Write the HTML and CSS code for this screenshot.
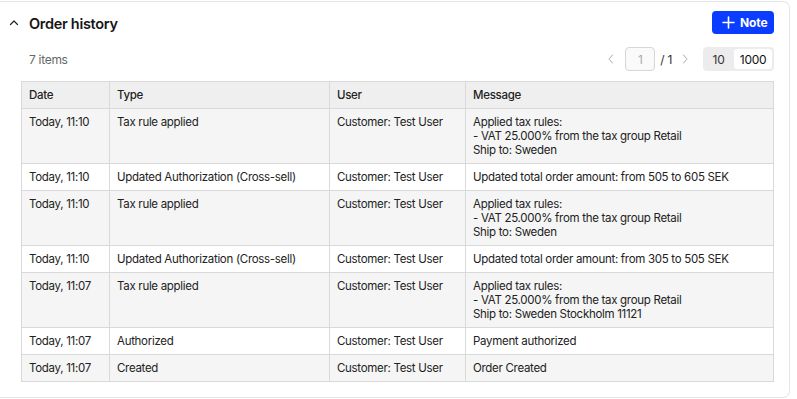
FILE: index.html
```html
<!DOCTYPE html>
<html lang="en">
<head>
<meta charset="utf-8">
<title>Order history</title>
<link rel="stylesheet" href="styles.css">
</head>
<body>
<section class="card">
  <header class="card-head">
    <div class="head-left">
      <svg class="chev" width="12" height="12" viewBox="0 0 12 12"><path d="M2.5 7.5 L6 4 L9.5 7.5" fill="none" stroke="#222" stroke-width="1.2" stroke-linecap="round" stroke-linejoin="round"/></svg>
      <h2 class="title">Order history</h2>
    </div>
    <button class="note-btn"><svg width="13" height="13" viewBox="0 0 13 13"><path d="M6.5 1 V12 M1 6.5 H12" stroke="#fff" stroke-width="1.6" stroke-linecap="round"/></svg><span>Note</span></button>
  </header>
  <div class="toolbar">
    <span class="count">7 items</span>
    <div class="pager">
      <svg class="arrow" width="10" height="12" viewBox="0 0 10 12"><path d="M6.5 2 L3 6 L6.5 10" fill="none" stroke="#bbb" stroke-width="1.1" stroke-linecap="round" stroke-linejoin="round"/></svg>
      <span class="page-input">1</span>
      <span class="page-total">/ 1</span>
      <svg class="arrow" width="10" height="12" viewBox="0 0 10 12"><path d="M3.5 2 L7 6 L3.5 10" fill="none" stroke="#bbb" stroke-width="1.1" stroke-linecap="round" stroke-linejoin="round"/></svg>
      <div class="sizes">
        <span class="size">10</span>
        <span class="size active">1000</span>
      </div>
    </div>
  </div>
  <table class="grid">
    <colgroup><col class="c-date"><col class="c-type"><col class="c-user"><col class="c-msg"></colgroup>
    <thead>
      <tr><th>Date</th><th>Type</th><th>User</th><th>Message</th></tr>
    </thead>
    <tbody>
      <tr><td>Today, 11:10</td><td>Tax rule applied</td><td>Customer: Test User</td><td>Applied tax rules:<br>- VAT 25.000% from the tax group Retail<br>Ship to: Sweden</td></tr>
      <tr><td>Today, 11:10</td><td>Updated Authorization (Cross-sell)</td><td>Customer: Test User</td><td>Updated total order amount: from 505 to 605 SEK</td></tr>
      <tr><td>Today, 11:10</td><td>Tax rule applied</td><td>Customer: Test User</td><td>Applied tax rules:<br>- VAT 25.000% from the tax group Retail<br>Ship to: Sweden</td></tr>
      <tr><td>Today, 11:10</td><td>Updated Authorization (Cross-sell)</td><td>Customer: Test User</td><td>Updated total order amount: from 305 to 505 SEK</td></tr>
      <tr><td>Today, 11:07</td><td>Tax rule applied</td><td>Customer: Test User</td><td>Applied tax rules:<br>- VAT 25.000% from the tax group Retail<br>Ship to: Sweden Stockholm 11121</td></tr>
      <tr><td>Today, 11:07</td><td>Authorized</td><td>Customer: Test User</td><td>Payment authorized</td></tr>
      <tr><td>Today, 11:07</td><td>Created</td><td>Customer: Test User</td><td>Order Created</td></tr>
    </tbody>
  </table>
</section>
</body>
</html>
```
FILE: styles.css
```css
* { box-sizing: border-box; }
html, body { margin: 0; background: #fff; }
body {
  font-family: Inter, "Noto Sans", sans-serif;
  font-size: 12px;
  color: #1f1f1f;
}
.card {
  margin-top: 1px;
  width: 790px;
  height: 397px;
  border: 1px solid #e6e6e6;
  border-left: none;
  border-radius: 0 7px 7px 0;
  padding: 9px 15px 0 0;
}
.card-head {
  display: flex;
  align-items: center;
  justify-content: space-between;
  height: 24px;
}
.head-left {
  display: flex;
  align-items: center;
  gap: 9px;
  padding-left: 8px;
}
.chev { display: block; }
.title {
  margin: 0;
  font-size: 14.5px;
  font-weight: 600;
  color: #161616;
  letter-spacing: -0.3px;
  line-height: 20px;
  position: relative;
  top: 1px;
}
.note-btn {
  display: flex;
  align-items: center;
  gap: 5px;
  height: 23px;
  width: 62px;
  margin-top: -1px;
  padding: 0 0 0 10px;
  border: none;
  border-radius: 4px;
  background: #0a3dff;
  color: #fff;
  font-family: Inter, "Noto Sans", sans-serif;
  font-size: 12px;
  font-weight: 700;
  letter-spacing: -0.1px;
}
.note-btn svg { display: block; }
.toolbar {
  display: flex;
  align-items: center;
  justify-content: space-between;
  margin: 12px 0 10px 21px;
  padding-left: 8px;
  height: 24px;
  letter-spacing: -0.3px;
}
.count { color: #666; font-size: 12px; }
.pager {
  display: flex;
  align-items: center;
}
.arrow { display: block; }
.pager > .arrow:first-child { margin-right: 9px; }
.page-input {
  width: 30px;
  height: 24px;
  border: 1px solid #d6d6d6;
  border-radius: 4px;
  display: flex;
  align-items: center;
  justify-content: center;
  color: #aaa;
  background: #fafafa;
}
.page-total { margin: 0 8px 0 5px; color: #333; }
.sizes {
  margin-left: 13px;
  display: flex;
  align-items: center;
  background: #ececec;
  border-radius: 4px;
  padding: 2px 2px 2px 0;
  height: 24px;
}
.size {
  display: flex;
  align-items: center;
  justify-content: center;
  height: 20px;
  color: #333;
}
.size:first-child { width: 31px; }
.size.active {
  width: 38px;
  background: #fff;
  border-radius: 3px;
  color: #111;
}
.grid {
  margin-left: 21px;
  width: 752px;
  border-collapse: collapse;
  table-layout: fixed;
}
.c-date { width: 88px; }
.c-type { width: 220px; }
.c-user { width: 136px; }
.c-msg { width: 308px; }
.grid th, .grid td {
  border: 1px solid #d9d9d9;
  padding: 6px 7px;
  line-height: 14px;
  text-align: left;
  vertical-align: top;
  font-size: 11.5px;
  letter-spacing: -0.3px;
  color: #222;
}
.grid th {
  font-weight: 500;
  background: #efefef;
}
.grid tbody tr:nth-child(odd) td { background: #f5f5f5; }
.grid tbody tr:nth-child(even) td { background: #fff; }
```
